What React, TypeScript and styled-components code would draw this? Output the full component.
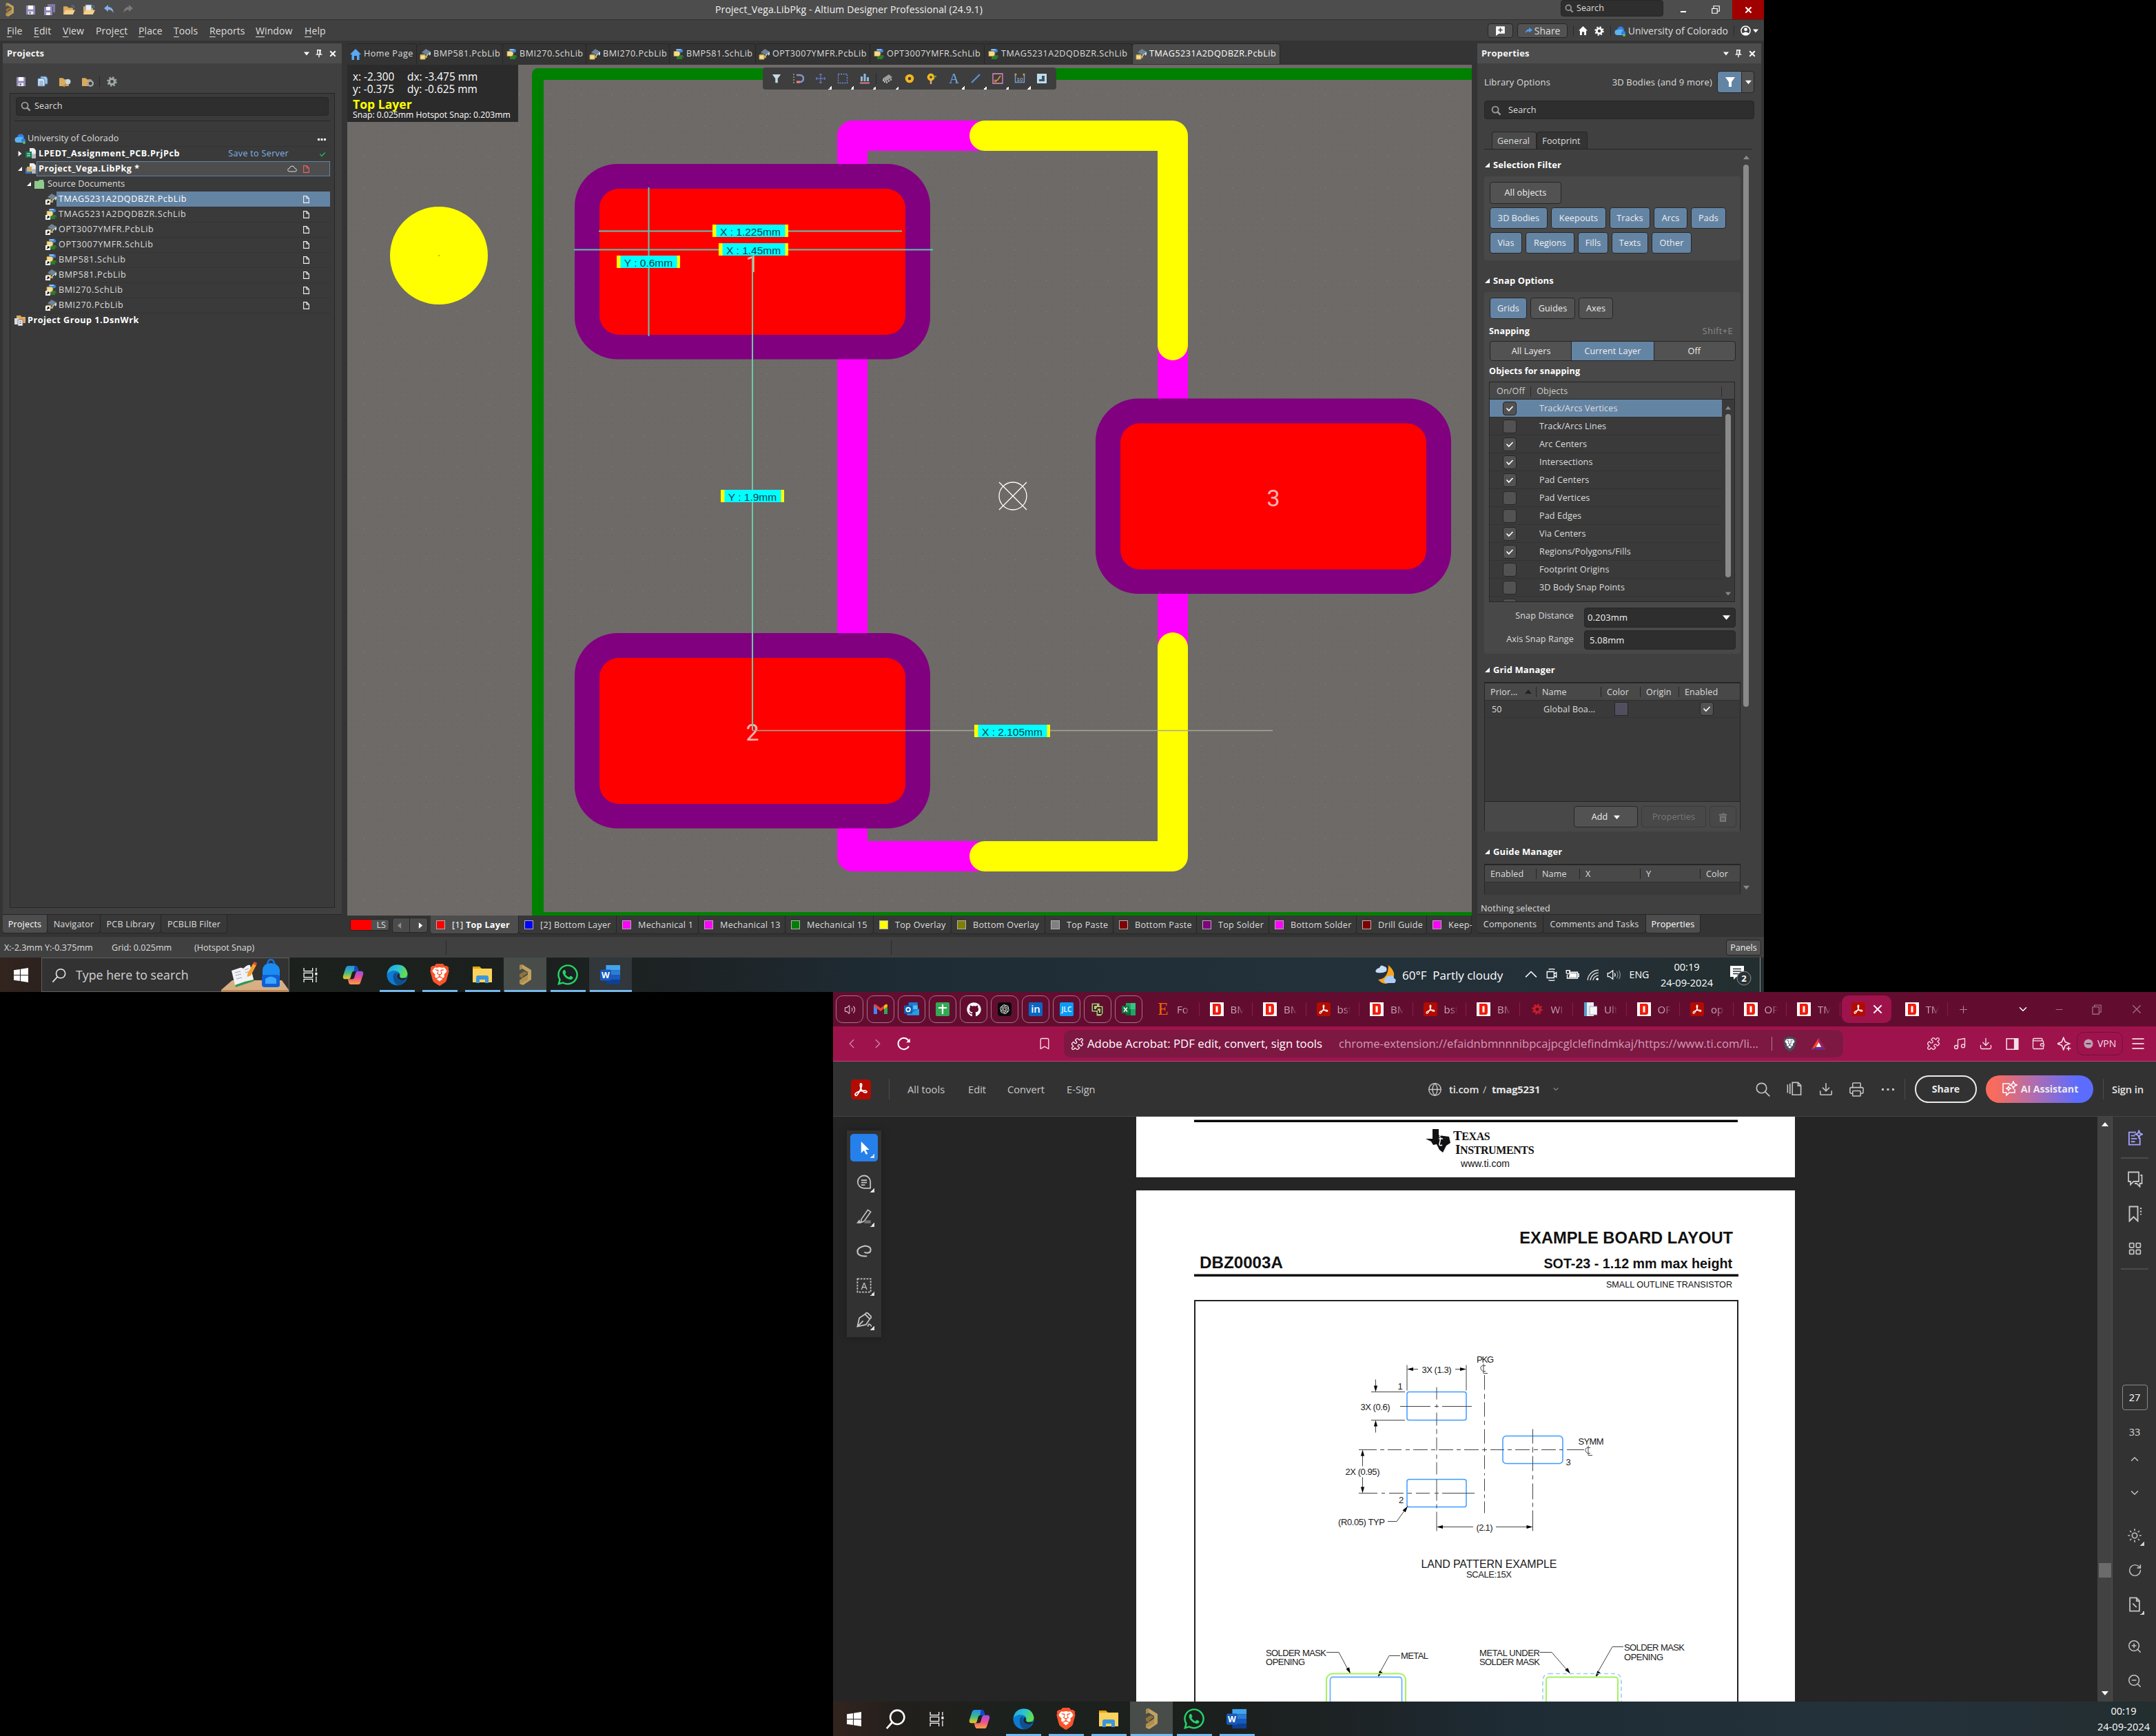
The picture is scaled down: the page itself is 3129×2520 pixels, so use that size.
import React from 'react';
import styled, { createGlobalStyle, css } from 'styled-components';
import {
  Bookmark, Music, Download, Wallet, Puzzle, Menu, Minus, Plus, ChevronDown, ChevronUp,
  ChevronLeft, ChevronRight, Globe, Printer, ZoomIn, ZoomOut, Sun, LayoutGrid, RotateCw, Volume2,
} from 'lucide-react';
import { FaGithub, FaWhatsapp } from 'react-icons/fa';
import { FaBrave } from 'react-icons/fa6';
import { RiOpenaiFill } from 'react-icons/ri';

const Global = createGlobalStyle`
  * { box-sizing: border-box; }
  body { margin: 0; background: #000; }
  svg { display: block; flex: none; }
`;

const ui = `"Open Sans", "Noto Sans", sans-serif`;
const arial = `"Liberation Sans", Arial, sans-serif`;
const edge = '#262626';

const Desktop = styled.div`
  width: 3129px;
  height: 2520px;
  background: #000;
  font: 12.6px/1 ${ui};
  color: #dedede;
  white-space: nowrap;
  overflow: hidden;
`;
const Monitor = styled.div<{ $w: number; $h: number; $left?: number }>`
  width: ${p => p.$w}px;
  height: ${p => p.$h}px;
  margin-left: ${p => p.$left ?? 0}px;
  display: flex;
  flex-direction: column;
  overflow: hidden;
`;

/* ---------- Altium chrome ---------- */
const TitleBar = styled.div`
  height: 29px;
  flex: none;
  background: #4d4d4d;
  border-bottom: 1px solid #303030;
  display: flex;
  align-items: center;
`;
const QuickAccess = styled.div`
  width: 1038px;
  padding-left: 7px;
  display: flex;
  gap: 12px;
  align-items: center;
  svg:first-child { margin-right: 4px; }
`;
const TitleText = styled.div`
  width: 1227px;
  font-size: 14px;
  letter-spacing: 0.12px;
  color: #f2f2f2;
`;
const TitleSearch = styled.div`
  width: 149px;
  height: 24px;
  margin-top: -4px;
  background: #2e2e2e;
  border: 1px solid ${edge};
  border-radius: 4px;
  display: flex;
  align-items: center;
  gap: 4px;
  padding-left: 5px;
  color: #dedede;
`;
const WinButton = styled.div<{ $red?: boolean; $w: number; $pr?: number }>`
  width: ${p => p.$w}px;
  height: 28px;
  padding-right: ${p => p.$pr ?? 0}px;
  display: flex;
  align-items: center;
  justify-content: center;
  background: ${p => (p.$red ? '#a00000' : 'transparent')};
`;
const MenuBar = styled.div`
  height: 30px;
  flex: none;
  background: #404040;
  display: flex;
  align-items: center;
  padding: 1px 0 0 10px;
  font-size: 14px;
`;
const MenuItem = styled.div<{ $w: number }>`
  width: ${p => p.$w}px;
  letter-spacing: 0.1px;
  u { text-underline-offset: 3px; }
`;
const MenuRight = styled.div`
  margin-left: auto;
  display: flex;
  align-items: center;
  height: 30px;
`;
const HeadButton = styled.div<{ $w: number }>`
  width: ${p => p.$w}px;
  height: 21px;
  margin-right: 6px;
  border: 1px solid ${edge};
  border-radius: 4px;
  background: #525252;
  display: flex;
  align-items: center;
  justify-content: center;
  gap: 3px;
`;
const Sep = styled.div<{ $h: number; $m?: string; $c?: string }>`
  width: 1px;
  height: ${p => p.$h}px;
  margin: ${p => p.$m ?? 0};
  background: ${p => p.$c ?? '#2a2a2a'};
  flex: none;
`;
const Workspace = styled.div`
  height: 1301px;
  flex: none;
  background: #343434;
  padding: 4px 4px 0;
  display: flex;
  gap: 8px;
`;
const Column = styled.div<{ $w: number }>`
  width: ${p => p.$w}px;
  display: flex;
  flex-direction: column;
  overflow: hidden;
`;
const PanelHeader = styled.div`
  height: 29px;
  flex: none;
  background: #4d4d4d;
  display: flex;
  align-items: center;
  padding: 0 7px 0 6px;
  font-weight: 700;
  font-size: 13px;
  letter-spacing: 0.2px;
  color: #f4f4f4;
  span { flex: 1; }
`;
const HeaderIcons = styled.div`
  display: flex;
  align-items: center;
  gap: 8px;
`;
const PanelBody = styled.div`
  height: 1236px;
  flex: none;
  background: #404040;
  border-bottom: 1px solid ${edge};
  letter-spacing: 0.12px;
`;
const DockTabs = styled.div`
  display: flex;
  height: 27px;
`;
const DockTab = styled.div<{ $w: number; $on?: boolean }>`
  width: ${p => p.$w}px;
  height: 27px;
  padding-top: 3px;
  letter-spacing: 0.18px;
  border: 1px solid ${edge};
  border-top: 0;
  border-left-width: 0;
  border-radius: 0 0 4px 4px;
  background: ${p => (p.$on ? '#4d4d4d' : '#383838')};
  color: ${p => (p.$on ? '#fff' : '#dedede')};
  display: flex;
  align-items: center;
  justify-content: center;
`;

/* ---------- Projects panel ---------- */
const ProjectTools = styled.div`
  height: 43px;
  display: flex;
  align-items: center;
  gap: 16px;
  padding: 9px 0 0 19px;
`;
const TreeBox = styled.div`
  height: 1183px;
  margin: 0 10px;
  border: 1px solid ${edge};
  background: #3a3a3a;
  padding: 5px 6px 0;
`;
const SearchField = styled.div<{ $h: number; $gap: number }>`
  height: ${p => p.$h}px;
  background: #2e2e2e;
  border: 1px solid ${edge};
  border-radius: 4px;
  display: flex;
  align-items: center;
  gap: ${p => p.$gap}px;
  padding-left: 6px;
`;
const TreeHead = styled.div`
  padding: 0 2px 7px;
  border-bottom: 1px solid ${edge};
  margin: 0 0 14px;
`;
const TreeRow = styled.div<{ $indent: number; $bold?: boolean; $file?: boolean }>`
  height: 22px;
  display: flex;
  align-items: center;
  padding-left: ${p => p.$indent}px;
  font-weight: ${p => (p.$bold ? 700 : 400)};
  letter-spacing: ${p => (p.$bold ? 0.52 : p.$file ? 0.58 : 0.08)}px;
  color: ${p => (p.$bold ? '#fff' : '#dedede')};
`;
const Twisty = styled.div`
  width: 16px;
  display: flex;
  justify-content: center;
`;
const RowIcon = styled.div`
  width: 16px;
  flex: none;
`;
const RowLabel = styled.div<{ $state?: 'sel' | 'focus' }>`
  flex: 1;
  height: 22px;
  display: flex;
  align-items: center;
  padding-left: 3px;
  border-top: 1px solid #343434;
  ${p => p.$state === 'sel' && css`background: #6484a4; border-color: #6484a4; color: #fff;`}
  ${p => p.$state === 'focus' && css`background: #4d4d4d; border: 1px solid #6484a4; padding-left: 2px;`}
`;
const Fill = styled.div`flex: 1;`;
const Status = styled.div<{ $w: number }>`
  width: ${p => p.$w}px;
`;
const Link = styled.span`
  color: #7fb2ec;
  font-weight: 400;
  letter-spacing: 0.3px;
  margin-right: 44px;
`;

/* ---------- Document area ---------- */
const DocTabs = styled.div`
  height: 31px;
  flex: none;
  display: flex;
`;
const DocTab = styled.div<{ $w: number; $on?: boolean }>`
  width: ${p => p.$w}px;
  flex: none;
  height: 30px;
  display: flex;
  align-items: center;
  gap: 4px;
  padding-left: 4px;
  letter-spacing: 0.5px;
  border: 1px solid ${edge};
  border-left: 0;
  border-bottom: 0;
  border-radius: 4px 4px 0 0;
  background: ${p => (p.$on ? '#4d4d4d' : '#343434')};
  color: ${p => (p.$on ? '#fff' : '#dedede')};
`;
const Canvas = styled.div`
  position: relative;
  height: 1235px;
  flex: none;
`;
const HeadsUp = styled.div`
  position: absolute;
  left: 0;
  top: 0;
  width: 248px;
  height: 83px;
  background: #2b2b2b;
  color: #fff;
  padding: 9px 0 0 8px;
  font-size: 15.4px;
  line-height: 18px;
`;
const HudRow = styled.div`
  display: flex;
  span { width: 79px; }
`;
const HudLayer = styled.div`
  font-size: 17.6px;
  font-weight: 700;
  color: #ffff00;
  line-height: 22px;
  margin-top: 1px;
`;
const HudSnap = styled.div`
  font-size: 12.2px;
  line-height: 12px;
  margin-top: -1px;
`;
const ActiveBar = styled.div`
  position: absolute;
  left: 603px;
  top: 4px;
  width: 426px;
  height: 32px;
  border-radius: 4px;
  background: #3e3e3e;
  display: flex;
  align-items: center;
  padding-left: 4px;
`;
const ToolCell = styled.div<{ $more?: boolean }>`
  width: 32px;
  height: 32px;
  display: flex;
  align-items: center;
  justify-content: center;
  ${p => p.$more && css`
    background: linear-gradient(135deg, transparent 50%, #fff 50%) 27px 27px / 5px 5px no-repeat;
  `}
`;
const LayerBar = styled.div`
  height: 31px;
  flex: none;
  display: flex;
  align-items: flex-start;
  padding-left: 4px;
  overflow: hidden;
`;
const LayerSet = styled.div`
  margin: 5px 4px 0 0;
  width: 57px;
  flex: none;
  height: 17px;
  border: 1px solid ${edge};
  border-radius: 3px;
  background: linear-gradient(90deg, #f00 30px, #525252 30px);
  text-align: right;
  padding: 2px 4px 0 0;
`;
const LayerArrows = styled.div`
  margin: 3px 4px 0 0;
  width: 52px;
  flex: none;
  height: 22px;
  border: 1px solid ${edge};
  border-radius: 4px;
  background: #4b4b4b;
  display: flex;
  align-items: center;
  justify-content: space-around;
`;
const LayerTab = styled.div<{ $w: number; $on?: boolean }>`
  width: ${p => p.$w}px;
  height: 27px;
  flex: none;
  display: flex;
  align-items: center;
  gap: 10px;
  padding: 3px 0 0 8px;
  letter-spacing: 0.3px;
  border: 1px solid ${edge};
  border-left: 0;
  border-top: 0;
  border-radius: 0 0 4px 4px;
  background: ${p => (p.$on ? '#4d4d4d' : '#383838')};
  color: ${p => (p.$on ? '#fff' : '#dedede')};
`;
const Swatch = styled.i<{ $c: string }>`
  width: 13px;
  height: 13px;
  margin-top: -2px;
  flex: none;
  background: ${p => p.$c};
  border: 1px solid #b0b0b0;
`;

/* ---------- Properties panel ---------- */
const OptionsRow = styled.div`
  height: 54px;
  display: flex;
  align-items: center;
  padding: 0 10px;
  font-size: 13px;
  letter-spacing: 0.15px;
`;
const FilterButton = styled.div`
  width: 54px;
  height: 32px;
  margin-left: 7px;
  border: 1px solid ${edge};
  border-radius: 4px;
  background: linear-gradient(90deg, #6484a4 34px, ${edge} 34px, ${edge} 35px, #525252 35px);
  display: flex;
  align-items: center;
  padding-left: 10px;
  gap: 14px;
`;
const PropSearch = styled(SearchField)`
  margin: 0 10px;
  padding: 1px 0 0 9px;
`;
const PropTabs = styled.div`
  margin: 18px 13px 0 10px;
  height: 26px;
  padding-left: 11px;
  border-bottom: 1px solid ${edge};
  display: flex;
`;
const PropTab = styled.div<{ $w: number; $on?: boolean }>`
  width: ${p => p.$w}px;
  border: 1px solid ${edge};
  border-bottom: 0;
  border-radius: 4px 4px 0 0;
  background: ${p => (p.$on ? '#4a4a4a' : '#343434')};
  display: flex;
  align-items: center;
  justify-content: center;
  padding: 3px 2px 0 0;
`;
const PropScroll = styled.div`
  display: flex;
  height: 1082px;
  padding-left: 10px;
`;
const PropContent = styled.div`
  width: 372px;
  height: 1082px;
  overflow: hidden;
`;
const Heading = styled.div<{ $top: number }>`
  height: 20px;
  margin-top: ${p => p.$top}px;
  display: flex;
  align-items: center;
  gap: 5px;
  padding-left: 1px;
  font-size: 13px;
  font-weight: 700;
  color: #fff;
`;
const Group = styled.div<{ $h: number }>`
  height: ${p => p.$h}px;
  margin-top: 7px;
  padding: 8px 7px 0 8px;
  background: #484848;
  border-radius: 4px;
`;
const Buttons = styled.div<{ $mb?: number }>`
  display: flex;
  gap: 5px;
  margin-bottom: ${p => p.$mb ?? 5}px;
`;
const Button = styled.div<{ $w: number; $h?: number; $on?: boolean; $dim?: boolean }>`
  width: ${p => p.$w}px;
  height: ${p => p.$h ?? 31}px;
  padding-top: 1px;
  border: 1px solid ${p => (p.$dim ? '#3a3a3a' : edge)};
  border-radius: 4px;
  background: ${p => (p.$on ? '#6484a4' : p.$dim ? '#484848' : '#525252')};
  color: ${p => (p.$dim ? '#777' : '#f0f0f0')};
  display: flex;
  align-items: center;
  justify-content: center;
  gap: 9px;
`;
const Caption = styled.div<{ $h: number }>`
  height: ${p => p.$h}px;
  display: flex;
  align-items: center;
  justify-content: space-between;
  padding: 1px 4px 0 0;
  margin-left: -1px;
  b { color: #fff; }
  span { color: #8b8b8b; letter-spacing: 0.5px; }
`;
const Segments = styled.div`
  height: 29px;
  display: flex;
  border: 1px solid ${edge};
  border-radius: 4px;
  background: #525252;
`;
const Segment = styled.div<{ $on?: boolean }>`
  flex: 1;
  display: flex;
  align-items: center;
  justify-content: center;
  padding-top: 1px;
  color: #f0f0f0;
  ${p => p.$on && css`background: #6484a4; box-shadow: -1px 0 ${edge}, 1px 0 ${edge};`}
`;
const SnapTable = styled.div`
  margin: 1px 0 0 -1px;
  width: 357px;
  height: 320px;
  border: 1px solid ${edge};
  display: flex;
  flex-direction: column;
  overflow: hidden;
  background: #3a3a3a;
`;
const SnapHead = styled.div`
  height: 25px;
  flex: none;
  background: #484848;
  border-bottom: 1px solid ${edge};
  display: flex;
  align-items: center;
  padding: 2px 18px 0 10px;
  color: #cfcfcf;
`;
const SnapRows = styled.div`flex: 1;`;
const SnapBody = styled.div`
  display: flex;
  height: 293px;
`;
const SnapRow = styled.div<{ $on?: boolean }>`
  height: 26px;
  display: flex;
  align-items: center;
  gap: 33px;
  padding: 1px 0 0 19px;
  border-bottom: 1px solid #323232;
  background: ${p => (p.$on ? '#6484a4' : 'transparent')};
`;
const Check = styled.div`
  width: 20px;
  height: 20px;
  border: 1px solid ${edge};
  border-radius: 4px;
  background: #525252;
  display: flex;
  align-items: center;
  justify-content: center;
`;
const Track = styled.div<{ $w: number }>`
  width: ${p => p.$w}px;
  display: flex;
  flex-direction: column;
  align-items: center;
`;
const Thumb = styled.div<{ $h: number; $mt: number; $mb: number }>`
  width: 8px;
  height: ${p => p.$h}px;
  margin: ${p => p.$mt}px 0 ${p => p.$mb}px;
  border-radius: 4px;
  background: #8a8a8a;
`;
const Field = styled.div<{ $mt: number; $lift?: number }>`
  margin-top: ${p => p.$mt}px;
  display: flex;
  align-items: center;
  label { width: 122px; text-align: right; margin-right: 15px; padding-bottom: ${p => p.$lift ?? 0}px; }
`;
const Input = styled.div<{ $h: number; $pl: number }>`
  width: 220px;
  height: ${p => p.$h}px;
  border: 1px solid ${edge};
  border-radius: 4px;
  background: #2e2e2e;
  color: #f2f2f2;
  display: flex;
  align-items: center;
  justify-content: space-between;
  padding: 0 7px 0 ${p => p.$pl}px;
  font-size: 13px;
`;
const Grid = styled.div<{ $h: number; $cut?: boolean }>`
  height: ${p => p.$h}px;
  margin-top: 8px;
  border: 1px solid ${edge};
  border-top-width: 2px;
  ${p => p.$cut && css`border-bottom: 0;`}
  border-radius: 0 0 3px 3px;
  background: #3a3a3a;
`;
const GridHead = styled.div`
  height: 25px;
  background: #484848;
  border-bottom: 1px solid #303030;
  display: flex;
  align-items: center;
`;
const GridCell = styled.div<{ $w: number; $last?: boolean }>`
  width: ${p => p.$w}px;
  flex: none;
  padding-left: 8px;
  line-height: 15px;
  border-right: ${p => (p.$last ? 0 : 1)}px solid ${edge};
  display: flex;
  align-items: center;
  justify-content: space-between;
  padding-right: 6px;
`;
const GridRow = styled.div`
  height: 25px;
  display: flex;
  align-items: center;
  padding-left: 2px;
  border-bottom: 1px solid #343434;
`;
const GridFoot = styled.div`
  margin-top: 121px;
  height: 44px;
  border-top: 1px solid ${edge};
  background: #484848;
  display: flex;
  justify-content: flex-end;
  gap: 5px;
  padding: 6px 5px 0 0;
`;
const Nothing = styled.div`
  height: 29px;
  display: flex;
  align-items: center;
  padding: 12px 0 0 5px;
`;
const StatusBar = styled.div`
  height: 30px;
  flex: none;
  background: #404040;
  display: flex;
  align-items: center;
  padding: 1px 4px 0 6px;
  font-size: 12.6px;
`;
const StatusText = styled.div<{ $w: number }>`width: ${p => p.$w}px; flex: none; padding-top: 1px;`;

/* ---------- Windows taskbar ---------- */
const Taskbar = styled.div`
  height: 50px;
  flex: none;
  display: flex;
  background: linear-gradient(90deg, #33241f 0, #221f1c 5%, #1c211d 14%, #1b201e 30%, #1d2224 38%, #1e2c36 52%, #22313a 75%, #243038 88%, #232e2f 100%);
  color: #fff;
`;
const TaskCell = styled.div<{ $w?: number; $hl?: string; $run?: number }>`
  width: ${p => p.$w ?? 62}px;
  height: 50px;
  flex: none;
  display: flex;
  align-items: center;
  justify-content: center;
  ${p => p.$run && css`
    background: linear-gradient(#76b9ed, #76b9ed) center bottom / ${p.$run}px 3px no-repeat, ${p.$hl ?? 'transparent'};
  `}
`;
const TaskSearch = styled.div`
  width: 360px;
  height: 50px;
  border: 1px solid #5f5f5f;
  background: #323232;
  display: flex;
  align-items: center;
  padding: 1px 0 0 14px;
  font-size: 17.8px;
  color: #d2d2d2;
  gap: 13px;
  svg:last-child { margin-left: auto; }
`;
const Tray = styled.div`
  margin-left: auto;
  display: flex;
  align-items: center;
  font-size: 17px;
`;
const Weather = styled.div`
  width: 212px;
  display: flex;
  align-items: center;
  gap: 8px;
  white-space: pre;
`;
const Clock = styled.div<{ $w: number }>`
  width: ${p => p.$w}px;
  font-size: 14.6px;
  line-height: 23px;
  text-align: center;
`;
const Eng = styled.span`font-size: 14.2px;`;

/* ---------- Browser ---------- */
const TabStrip = styled.div`
  height: 50px;
  flex: none;
  background: #620d2f;
  display: flex;
  align-items: center;
  padding-left: 4px;
`;
const Pin = styled.div`
  width: 40px;
  height: 40px;
  margin-right: 5px;
  flex: none;
  border: 1px solid #a8718a;
  border-radius: 10px;
  display: flex;
  align-items: center;
  justify-content: center;
`;
const BTab = styled.div`
  width: 77.5px;
  height: 20px;
  flex: none;
  display: flex;
  align-items: center;
  padding-left: 15px;
  border-right: 1px solid #94164a;
`;
const BTabText = styled.span`
  width: 19px;
  margin-left: 10px;
  font-size: 15px;
  line-height: 20px;
  overflow: hidden;
  color: #c9a3b3;
  mask-image: linear-gradient(90deg, #000 50%, transparent);
`;
const ActiveTab = styled.div`
  width: 72px;
  height: 40px;
  flex: none;
  margin: 0 5px 0 2px;
  border-radius: 10px;
  background: #9f134c;
  display: flex;
  align-items: center;
  padding-left: 14px;
  gap: 9px;
`;
const Cell = styled.div<{ $w: number }>`
  width: ${p => p.$w}px;
  display: flex;
  align-items: center;
  justify-content: center;
  flex: none;
`;
const AddressBar = styled.div`
  height: 51px;
  flex: none;
  background: #9f134c;
  border-bottom: 1px solid #b9487a;
  display: flex;
  align-items: center;
  padding-left: 8px;
`;
const UrlBox = styled.div`
  width: 1131px;
  height: 40px;
  flex: none;
  margin-left: 9px;
  border-radius: 10px;
  background: #7d1843;
  display: flex;
  align-items: center;
  padding-left: 10px;
  font-size: 16.8px;
  color: #fff;
`;
const UrlTitle = styled.span`width: 365px; margin-left: 5px; flex: none;`;
const UrlText = styled.span`width: 628px; flex: none; color: #cf9cb3; font-size: 16.6px;`;
const Vpn = styled.div`
  width: 67px;
  height: 34px;
  border: 1px solid #6f1039;
  border-radius: 10px;
  display: flex;
  align-items: center;
  gap: 6px;
  padding-left: 9px;
  font-size: 14px;
  color: #f3dfe7;
`;
const AcroBar = styled.div`
  height: 80px;
  flex: none;
  background: #323232;
  border-bottom: 1px solid #444;
  display: flex;
  align-items: center;
  font-size: 14.7px;
  color: #c8c8c8;
  padding: 1px 0 0 26px;
`;
const AcroItem = styled.div<{ $w: number; $weight?: number }>`
  width: ${p => p.$w}px;
  flex: none;
  ${p => p.$weight && css`font-weight: ${p.$weight}; color: #e6e6e6; letter-spacing: -0.15px;`}
`;
const Pill = styled.div<{ $w: number; $ai?: boolean }>`
  width: ${p => p.$w}px;
  height: 40px;
  flex: none;
  border-radius: 20px;
  display: flex;
  align-items: center;
  justify-content: center;
  gap: 5px;
  font-weight: 700;
  font-size: 14.2px;
  color: #ebebeb;
  ${p => (p.$ai ? css`background: linear-gradient(90deg, #f96b5c 8%, #b06cb0 45%, #5c6cff 85%);` : css`border: 2px solid #ebebeb;`)}
`;
const Viewer = styled.div`
  height: 849px;
  flex: none;
  background: #252525;
  display: flex;
`;
const ToolRail = styled.div`
  width: 50px;
  height: 300px;
  margin: 20px 370px 0 20px;
  background: #323232;
  box-shadow: 0 0 8px #1c1c1c;
  padding: 5px;
`;
const RailTool = styled.div<{ $on?: boolean; $more?: boolean }>`
  width: 40px;
  height: 40px;
  margin-bottom: 10px;
  border-radius: 5px;
  display: flex;
  align-items: center;
  justify-content: center;
  background: ${p => (p.$more ? 'linear-gradient(135deg, transparent 50%, #e0e0e0 50%) 29px 29px / 6px 6px no-repeat' : 'none')}
    ${p => (p.$on ? ', #2680eb' : '')};
`;
const Pages = styled.div`width: 956px;`;
const FooterPage = styled.div`
  height: 88px;
  background: #fff;
  padding: 4px 83px 0 84px;
  color: #111;
`;
const Rule = styled.div`
  height: 4px;
  border-top: 1px solid #999;
  background: #000;
`;
const TiBrand = styled.div`
  display: flex;
  margin: 10px 0 0 336px;
  gap: 4px;
`;
const TiWords = styled.div`
  font: 700 19px/19px "Liberation Serif", "Times New Roman", serif;
  letter-spacing: -0.4px;
  small { font-size: 16px; }
  div + div { margin-left: 3px; }
`;
const TiUrl = styled.div`
  font: 14px/14px ${arial};
  text-align: center;
  padding-left: 56px;
  margin-top: 3px;
`;
const SheetPage = styled.div`
  height: 742px;
  margin-top: 19px;
  background: #fff;
  color: #111;
  font-family: ${arial};
  padding: 0 82px 0 84px;
  overflow: hidden;
`;
const SheetTitle = styled.div`
  padding: 56px 8px 0 0;
  text-align: right;
  font-weight: 700;
  font-size: 23.7px;
  line-height: 26px;
`;
const SheetSub = styled.div`
  display: flex;
  justify-content: space-between;
  align-items: baseline;
  padding: 9px 9px 1px 8px;
  font-weight: 700;
  line-height: 28px;
  font-size: 19.7px;
  b { font-size: 24.2px; }
`;
const SheetKind = styled.div`
  text-align: right;
  padding-right: 9px;
  font-size: 12.6px;
  line-height: 20px;
  margin: 2px 0 12px;
`;
const Frame = styled.div`
  height: 583px;
  border: 2px solid #222;
  border-bottom: 0;
`;
const PageScroll = styled.div`
  width: 22px;
  margin-left: 439px;
  background: #424242;
  border-right: 1px solid #4e4e4e;
  display: flex;
  flex-direction: column;
  align-items: center;
  padding: 6px 0 7px;
`;
const PageThumb = styled.div`
  width: 18px;
  height: 21px;
  margin: 632px 0 auto;
  background: #6b6b6b;
`;
const RightRail = styled.div`
  flex: 1;
  background: #323232;
  display: flex;
  flex-direction: column;
  align-items: center;
  padding: 5px 0 0 1px;
  font-size: 14.6px;
  color: #d8d8d8;
`;
const RailCell = styled.div<{ $h: number; $more?: boolean }>`
  width: 40px;
  height: ${p => p.$h}px;
  display: flex;
  align-items: center;
  justify-content: center;
  ${p => p.$more && css`
    background: linear-gradient(135deg, transparent 50%, #d0d0d0 50%) 28px calc(50% + 12px) / 6px 6px no-repeat;
  `}
`;
const RailLine = styled.div<{ $h: number }>`
  width: 40px;
  height: ${p => p.$h}px;
  margin: 4px 0 5px;
  background: #4b4b4b;
`;
const PageNo = styled.div`
  width: 37px;
  height: 37px;
  flex: none;
  border: 1px solid #8a8a8a;
  border-radius: 4px;
  display: flex;
  align-items: center;
  justify-content: center;
  color: #fff;
`;
const Spacer = styled.div<{ $h: number }>`height: ${p => p.$h}px; flex: none;`;
const ColorBox = styled.i`width: 20px; height: 20px; border: 1px solid ${edge}; background: #514f5f;`;
const AiTile = styled.div`
  width: 20px;
  height: 20px;
  border-radius: 4px;
  background: #0b0b0b;
  display: flex;
  align-items: center;
  justify-content: center;
`;
const TabFav = styled.div`width: 20px; display: flex; justify-content: center; flex: none;`;

/* ---------- Icons ---------- */
const Svg = ({ w = 16, h = w, vb = '0 0 16 16', children }: { w?: number; h?: number; vb?: string; children: React.ReactNode }) => (
  <svg width={w} height={h} viewBox={vb} fill="none">{children}</svg>
);
const Altium = ({ w = 14, h = 20 }) => (
  <Svg w={w} h={h} vb="0 0 20 30">
    <path d="M2 1L6 0L19 8V22L7 30L2 28V23L14 15V11L6 6L2 8Z" fill="#c0a160" />
    <path d="M14 15V22L7 26L2 28V23Z" fill="#b08f4e" />
    <path d="M2 14L9 10L14 12.500L7 17V20L2 18Z" fill="#8f7438" />
    <path d="M2 1L6 0V6L2 8Z" fill="#a98a4a" />
  </Svg>
);
const Floppy = () => (
  <Svg w={15}><path d="M1 1H15V15H1Z" fill="#8f88b8" /><path d="M4 1H12V7H4Z" fill="#fff" /><path d="M4 10H12V15H4Z" fill="#e9e9f2" /><path d="M6 11H8V14H6Z" fill="#555" /></Svg>
);
const Floppies = () => (
  <Svg><path d="M5 0H16V12H13V4H5Z" fill="#7f78ac" /><path d="M0 4H12V16H0Z" fill="#8f88b8" /><path d="M3 4H9V9H3Z" fill="#fff" /><path d="M3 12H9V16H3Z" fill="#eee" /></Svg>
);
const Folder = ({ badge }: { badge?: 'open' | 'doc' | 'find' | 'gear' }) => (
  <Svg w={17}>
    <path d="M0 3H5L7 5H13V14H0Z" fill="#d9a95c" />
    {badge === 'doc' && <path d="M3 1H11V10H3Z" fill="#e8eef5" stroke="#7c98b8" strokeWidth=".7" />}
    {(badge === 'open' || badge === 'doc') && <><path d="M3 8H16L13 14H0Z" fill="#f4cf8c" /><path d="M11 2Q14 1 15 5" stroke="#4a90c0" /></>}
    {badge === 'find' && <><circle cx="12" cy="8" r="3.500" fill="#c6d7e4" /><path d="M9.500 11L6 15" stroke="#c08b4a" strokeWidth="2" /></>}
    {badge === 'gear' && <circle cx="11.500" cy="10.500" r="3.400" stroke="#9ea4a8" strokeWidth="2.400" fill="#3a3a3a" />}
  </Svg>
);
const Docs = () => (
  <Svg><path d="M5 1H13L15 4V12H5Z" fill="#a7c4e4" stroke="#4878a8" /><path d="M1 4H9L11 7V15H1Z" fill="#e3eefa" stroke="#4878a8" /><path d="M3 8H9M3 10.500H9M3 13H9" stroke="#4878a8" /></Svg>
);
const Gear = ({ s = 15, c = '#a0a8ac' }) => (
  <Svg w={s}><circle cx="8" cy="8" r="4.200" stroke={c} strokeWidth="3.200" /><circle cx="8" cy="8" r="6.600" stroke={c} strokeWidth="2.200" strokeDasharray="2.600 2.580" /></Svg>
);
const Undo = ({ c, flip }: { c: string; flip?: boolean }) => (
  <Svg><g transform={flip ? 'translate(16 0) scale(-1 1)' : undefined}><path d="M1 6L7 1V4Q14 4 15 13Q12 8 7 8V11Z" fill={c} /></g></Svg>
);
const Magnifier = ({ s = 15, c = '#9a9a9a' }) => (
  <Svg w={s}><circle cx="6.500" cy="6.500" r="4.800" stroke={c} strokeWidth="2" /><path d="M10 10L14.500 14.500" stroke={c} strokeWidth="2.600" /></Svg>
);
const Cloud = () => (
  <Svg><circle cx="9" cy="6.500" r="5" fill="#2f7fe6" /><circle cx="4.500" cy="10" r="4" fill="#5bb4f0" /><circle cx="9" cy="9.500" r="4" fill="#5bb4f0" /><path d="M4 8H13V14H4Z" fill="#5bb4f0" /><circle cx="13" cy="11" r="3" fill="#2f7fe6" /><circle cx="14" cy="14" r="2" fill="#5fc05f" /></Svg>
);
const Tri = ({ d = 'down', c = '#fff', w = 8 }: { d?: 'down' | 'up' | 'left' | 'right' | 'corner'; c?: string; w?: number }) => {
  const pts = { down: '0,2 10,2 5,8', up: '0,8 10,8 5,2', left: '8,0 8,10 2,5', right: '2,0 2,10 8,5', corner: '10,0 10,10 0,10' }[d];
  return <Svg w={w} vb="0 0 10 10"><polygon points={pts} fill={c} /></Svg>;
};
const PinIcon = () => (
  <Svg w={12}><path d="M4 1H12M5 1V9M9.500 1V9M10.500 1V9M2 9.500H14M8 9V15" stroke="#fff" strokeWidth="1.800" /></Svg>
);
const Cross = ({ s = 12, c = '#fff', k = 2.6 }) => (
  <Svg w={s}><path d="M3 3L13 13M13 3L3 13" stroke={c} strokeWidth={k} /></Svg>
);
const DocGlyph = ({ c = '#f0f0f0' }) => (
  <Svg w={9} h={11} vb="0 0 9 11"><path d="M.6.600H5L8.400 4V10.400H.6ZM5 .6V4H8.400" stroke={c} strokeWidth="1.100" /></Svg>
);
const PcbIcon = ({ shortcut = true }) => (
  <Svg w={16}>
    <path d="M3 5L9 0L16 4L10 9Z" fill="#6f8394" /><path d="M3 5L10 9V11L3 8Z" fill="#44545f" /><path d="M10 9L16 4V8L14 10V7L10 11Z" fill="#cfdfe6" />
    <path d="M1 8H8V10H1ZM5 10H11V13H5Z" fill="#c9a34a" />
    {shortcut ? <><path d="M0 9H7V16H0Z" fill="#fff" /><path d="M2 14L5 11M2.500 11H5V13.500" stroke="#000" strokeWidth="1.200" /></> : <path d="M1 9H8V15H1Z" fill="#f1dc92" stroke="#c9a34a" />}
  </Svg>
);
const SchIcon = ({ shortcut = true }) => (
  <Svg w={16}>
    <path d="M5 0H12Q15 0 15 3T11 5H5Z" fill="#3f86dc" /><path d="M6 .5H12V2H6Z" fill="#a8ccf4" />
    <path d="M6 9H14V15H6Z" fill="#2f7a2c" /><path d="M14 9L16 13" stroke="#2f7a2c" strokeWidth="1.500" />
    <path d="M2 3.500H9Q13 6.500 9 10.500H2Z" fill="#f4dc8e" stroke="#c2922e" strokeWidth=".8" />
    {shortcut && <><path d="M0 9H7V16H0Z" fill="#fff" /><path d="M2 14L5 11M2.500 11H5V13.500" stroke="#000" strokeWidth="1.200" /></>}
  </Svg>
);
const PrjIcon = ({ lib }: { lib?: boolean }) => (
  <Svg w={16}>
    <path d="M6 0H12L15 3V11H6Z" fill="#eee" />
    {lib ? <><path d="M0 7H8V15H0Z" fill="#3a78c8" /><path d="M2 5H10V12H2Z" fill="#d8ae5a" /></> : <><path d="M0 5H9V14H0Z" fill="#0c7a4a" /><path d="M2 8H7M2 11H7" stroke="#fff" /></>}
    <path d="M9 7H15V15H9Z" fill="#b6b6bd" /><ellipse cx="12" cy="7" rx="3.200" ry="1.500" fill="#e8e8ee" />
  </Svg>
);
const Tick = ({ c = '#fff', s = 12 }) => (
  <Svg w={s} vb="0 0 12 12"><path d="M1.500 5.500L4.800 9L10.500 3" stroke={c} strokeWidth="1.600" /></Svg>
);
const Funnel = ({ c = '#fff', s = 14 }) => (
  <Svg w={s}><path d="M1 1H15L10 8V15H6V8Z" fill={c} /></Svg>
);
const House = ({ s = 14, c = '#fff' }) => (
  <Svg w={s}><path d="M8 0L16 8H13.500V16H10V10H6V16H2.500V8H0Z" fill={c} /></Svg>
);
const Person = () => (
  <Svg w={15}><circle cx="8" cy="8" r="7" stroke="#fff" strokeWidth="1.600" /><circle cx="8" cy="6" r="2.600" fill="#fff" /><path d="M3 12.500Q8 7.500 13 12.500Q8 17 3 12.500Z" fill="#fff" /></Svg>
);
const Pdf = ({ s = 20 }) => (
  <Svg w={s} vb="0 0 24 24">
    <rect width="24" height="24" rx="4" fill="#b30b00" />
    <path d="M5.500 19C3.500 17.600 7 14.800 11 13.900S18.800 13.100 19 14.700 15.600 16.200 13.600 13.600 10.800 7.200 11.200 5.600 13.400 5 12.900 7.600 9.300 16.500 7.600 18.400 5.500 19 5.500 19Z" stroke="#fff" strokeWidth="1.500" />
  </Svg>
);
const DFav = () => (
  <Svg w={20} vb="0 0 20 20"><path d="M0 0H20V20H0Z" fill="#fff" /><path d="M4 2H13Q16 2 16 6V14Q16 18 13 18H4Z" fill="#f01b0c" /><path d="M8.500 5.500H11.500V14.500H8.500Z" fill="#fff" /></Svg>
);
const Brave = ({ s = 34, c = '#fb542b' }) => (
  <svg width={s} height={s} viewBox="0 0 34 34">
    <path d="M9 7L12 5H22L25 7L28 11L24 24L17 30L10 24L6 11Z" fill="#fff" />
    <FaBrave x={1} y={1} size={32} color={c} />
  </svg>
);
const WinLogo = () => (
  <Svg w={21} vb="0 0 20 20"><path d="M0 3L8.500 1.800V9.500H0ZM9.500 1.600L20 0V9.500H9.500ZM0 10.500H8.500V18.200L0 17ZM9.500 10.500H20V20L9.500 18.400Z" fill="#fff" /></Svg>
);
const TaskView = () => (
  <Svg w={21} vb="0 0 20 20"><path d="M1 0V4.500H13V0M1 20V15.500H13V20M1 7H13V13H1ZM18 0V5M18 12V20" stroke="#fff" strokeWidth="1.200" /><path d="M16.500 6.500H19.500V10H16.500Z" fill="#fff" /></Svg>
);
const Copilot = () => (
  <Svg w={31} vb="0 0 32 32">
    <defs>
      <linearGradient id="cpA" x1="0" y1="0" x2="0" y2="1"><stop offset="0" stopColor="#1f8df0" /><stop offset=".5" stopColor="#3fb98c" /><stop offset="1" stopColor="#f2c716" /></linearGradient>
      <linearGradient id="cpB" x1="0" y1="0" x2="0" y2="1"><stop offset="0" stopColor="#9a4df0" /><stop offset=".5" stopColor="#ee4f8e" /><stop offset="1" stopColor="#f9a03c" /></linearGradient>
    </defs>
    <path d="M9 2H19Q22 2 23 6L24 10H17Q15 10 14 13L12 20Q11 22 8 22H4Q0 22 1 17L5 5Q6 2 9 2Z" fill="url(#cpA)" />
    <path d="M18 2H20Q22 2 23 6L24 10H17Z" fill="#1846c8" />
    <path d="M23 30H13Q10 30 9 26L8 22H15Q17 22 18 19L20 12Q21 10 24 10H28Q32 10 31 15L27 27Q26 30 23 30Z" fill="url(#cpB)" />
  </Svg>
);
const EdgeLogo = () => (
  <Svg w={31} vb="0 0 32 32">
    <defs><linearGradient id="edgeTop" x1="0" y1="0" x2="1" y2=".4"><stop offset="0" stopColor="#1fa0e6" /><stop offset=".55" stopColor="#2cc4d0" /><stop offset="1" stopColor="#63de4c" /></linearGradient></defs>
    <circle cx="16" cy="16" r="15.500" fill="#0d7bd0" />
    <path d="M1 14Q3 1 16 .500T31.500 14Q31 20 24 20.500Q19 20.500 20 17Q21 11 14 9.500Q6 8.500 1 14Z" fill="url(#edgeTop)" />
    <path d="M10 18Q10 12 16 12Q13 16 16 20Q20 25 29 22.500Q25 31 16.500 31.500Q10 27 10 18Z" fill="#0f4f92" />
    <path d="M19.500 17.500Q20 21 25 20.500H32L28.500 22.500Q20 25 16.500 20.500Q14 16 18 13Q20 15 19.500 17.500Z" fill="#20262a" />
  </Svg>
);
const Explorer = () => (
  <Svg w={30} vb="0 0 30 28"><path d="M1 2H11L14 5V9H1Z" fill="#e6a20f" /><path d="M1 5H29V25H1Z" fill="#fbd35c" /><path d="M6 26V18Q6 15 9 15H21Q24 15 24 18V26H19V21H11V26Z" fill="#3a96dd" /></Svg>
);
const Word = () => (
  <Svg w={30} vb="0 0 32 32"><path d="M9 1H31V9H9Z" fill="#41a5ee" /><path d="M9 9H31V16H9Z" fill="#2b7cd3" /><path d="M9 16H31V23.500H9Z" fill="#185abd" /><path d="M9 23.500H31V31H9Z" fill="#103f91" /><rect y="8" width="17" height="17" rx="2" fill="#185abd" /><text x="8.500" y="21" fontSize="13" fontWeight="700" fill="#fff" textAnchor="middle" fontFamily="Open Sans">W</text></Svg>
);
const SearchArt = () => (
  <Svg w={98} h={48} vb="0 0 98 48">
    <path d="M16 31H88L98 45V48H0V45Z" fill="#d8ae84" /><path d="M0 45H98V48H0Z" fill="#b98a5c" />
    <path d="M17 20L42 12L48 32L21 41Z" fill="#2f9a50" /><path d="M15 17L27 13Q30 12 32 14Q38 8 42 9L47 30L34 33L20 38Z" fill="#f2f2f6" /><path d="M20 20L28 18M21 24L29 22M34 16L40 14M35 20L41 18M22 29L30 27" stroke="#9aa0b8" />
    <path d="M38 22L46 7L51 9L43 24L38 26Z" fill="#f4a22c" /><path d="M46 7L48 4L52 6L51 9Z" fill="#e8493c" />
    <path d="M67 10Q67 1 72 1T78 10" stroke="#1673e0" strokeWidth="2.500" /><path d="M60 16Q61 6 72 6T85 16V40H60Z" fill="#1a8cf4" /><rect x="59" y="23" width="26" height="18" rx="4" fill="#0f5fd6" /><path d="M64 29Q72 22 80 29V36H64Z" fill="#3aa6ff" />
  </Svg>
);
const Moon = () => (
  <Svg w={32} vb="0 0 32 32"><path d="M20 2Q34 14 24 26Q14 33 5 23Q20 22 20 2Z" fill="#f7a41d" /><path d="M2 9Q4 6 7 6Q9 0 14 4Q19 5 17 11Q12 14 4 13Q0 12 2 9Z" fill="#c5dcfb" /><path d="M15 22Q17 17 22 18Q27 15 28 21Q33 23 29 28H16Q12 26 15 22Z" fill="#a9cdfa" /></Svg>
);

const tray = [
  <Svg key="u" w={18}><path d="M1 11L8 4L15 11" stroke="#fff" strokeWidth="1.300" /></Svg>,
  <Svg key="m" w={18}><path d="M4 1Q8 0 12 1M4 15Q8 16 12 15M2 4H11V12H2ZM11 7L14 5V11L11 9" stroke="#fff" strokeWidth="1.200" /></Svg>,
  <Svg key="b" w={20}><path d="M4 5H14V12H2V8M14 7H15.500V10H14M1 3H5V6Q3 8 1 6Z" stroke="#fff" strokeWidth="1.100" /><path d="M5 6H13V11H4Z" fill="#fff" /></Svg>,
  <Svg key="w" w={18}><path d="M8 15A7 7 0 0 1 15 9M4.500 15A10.500 10.500 0 0 1 15 5.500M1 15A14 14 0 0 1 15 2" stroke="#ddd" strokeWidth="1.200" /><circle cx="13.500" cy="13.500" r="1.600" fill="#fff" /></Svg>,
  <Svg key="v" w={20}><path d="M1 6H3L7 3V13L3 10H1Z" stroke="#fff" /><path d="M9 6Q10.500 8 9 10" stroke="#fff" /><path d="M11.500 4Q14 8 11.500 12M14 3Q17 8 14 13" stroke="#888" /></Svg>,
];

const TaskApps = ({ wordHl }: { wordHl?: boolean }) => (
  <>
    <TaskCell $w={65}><Copilot /></TaskCell>
    <TaskCell $run={51}><EdgeLogo /></TaskCell>
    <TaskCell $run={51}><Brave /></TaskCell>
    <TaskCell $run={51}><Explorer /></TaskCell>
    <TaskCell $run={61} $hl="#484d4a"><Altium w={20} h={30} /></TaskCell>
    <TaskCell $run={51}><FaWhatsapp size={34} color="#25d366" /></TaskCell>
    <TaskCell $run={wordHl ? 61 : 51} $hl={wordHl ? '#31373a' : undefined}><Word /></TaskCell>
  </>
);

/* ---------- Data ---------- */
const menu: [string, string, string, number][] = [
  ['', 'F', 'ile', 39], ['', 'E', 'dit', 42], ['', 'V', 'iew', 48], ['Proje', 'c', 't', 62], ['', 'P', 'lace', 51],
  ['', 'T', 'ools', 52], ['', 'R', 'eports', 67], ['', 'W', 'indow', 71], ['', 'H', 'elp', 50],
];
const files = ['TMAG5231A2DQDBZR.PcbLib', 'TMAG5231A2DQDBZR.SchLib', 'OPT3007YMFR.PcbLib', 'OPT3007YMFR.SchLib', 'BMP581.SchLib', 'BMP581.PcbLib', 'BMI270.SchLib', 'BMI270.PcbLib'];
const docs: [string, number][] = [
  ['Home Page', 101], ['BMP581.PcbLib', 125], ['BMI270.SchLib', 121], ['BMI270.PcbLib', 121], ['BMP581.SchLib', 125],
  ['OPT3007YMFR.PcbLib', 166], ['OPT3007YMFR.SchLib', 166], ['TMAG5231A2DQDBZR.SchLib', 215], ['TMAG5231A2DQDBZR.PcbLib', 214],
];
const layers: [string, string, number][] = [
  ['[1] Top Layer', '#f00', 128], ['[2] Bottom Layer', '#00f', 142], ['Mechanical 1', '#f0f', 119], ['Mechanical 13', '#f0f', 126],
  ['Mechanical 15', '#008000', 128], ['Top Overlay', '#ff0', 113], ['Bottom Overlay', '#808000', 136], ['Top Paste', '#808080', 99],
  ['Bottom Paste', '#800000', 121], ['Top Solder', '#800080', 105], ['Bottom Solder', '#f0f', 127], ['Drill Guide', '#800000', 102], ['Keep-', '#f0f', 65],
];
const snaps: [string, boolean][] = [
  ['Track/Arcs Vertices', true], ['Track/Arcs Lines', false], ['Arc Centers', true], ['Intersections', true], ['Pad Centers', true],
  ['Pad Vertices', false], ['Pad Edges', false], ['Via Centers', true], ['Regions/Polygons/Fills', true], ['Footprint Origins', false],
  ['3D Body Snap Points', false], ['', false],
];
const pageTabs: [string, string][] = [
  ['E', 'Fo'], ['D', 'BM'], ['D', 'BM'], ['P', 'bst'], ['D', 'BM'], ['P', 'bst'], ['D', 'BM'], ['G', 'WI'], ['U', 'Ult'], ['D', 'OP'], ['P', 'op'], ['D', 'OP'], ['D', 'TM'],
];

const iconFor = (name: string, shortcut: boolean) => (name.endsWith('PcbLib') ? <PcbIcon shortcut={shortcut} /> : <SchIcon shortcut={shortcut} />);

/* ---------- PCB canvas ---------- */
const Pad = ({ x, y, n, ty }: { x: number; y: number; n: string; ty: number }) => (
  <>
    <rect x={x - 258} y={y - 142} width={516} height={283.5} rx={62} fill="#800080" />
    <rect x={x - 222} y={y - 106} width={444} height={212} rx={28} fill="#f00" />
    <text x={x} y={ty} fontSize="34" fill="#ffb4b4" textAnchor="middle" fontFamily="Roboto">{n}</text>
  </>
);
const Dim = ({ x, y, w, t }: { x: number; y: number; w: number; t: string }) => (
  <>
    <rect x={x} y={y} width={w} height={18} fill="#ff0" />
    <rect x={x + 5.5} y={y} width={w - 10} height={18} fill="#0ff" />
    <text x={x + w / 2} y={y + 16} fontSize="15.500" fill="#0a3c4c" textAnchor="middle" fontFamily="Liberation Sans" xmlSpace="preserve">{t}</text>
  </>
);
const Board = () => (
  <svg width={1632} height={1235} viewBox="504 94 1632 1235" fill="none">
    <defs>
      <pattern id="snapDots" x={663} y={182} width={9} height={9} patternUnits="userSpaceOnUse"><rect width={1} height={1} fill="#625e5c" /></pattern>
      <pattern id="gridDots" x={663} y={182} width={45} height={45} patternUnits="userSpaceOnUse"><rect width={1} height={1} fill="#8c8886" /></pattern>
    </defs>
    <rect x={504} y={94} width={1632} height={1235} fill="#6e6a68" />
    <rect x={504} y={94} width={1632} height={1235} fill="url(#snapDots)" />
    <rect x={504} y={94} width={1632} height={1235} fill="url(#gridDots)" />
    <path d="M2200 107.500H780.500V1332.500H2200" stroke="#008000" strokeWidth={17} strokeLinejoin="round" />
    <circle cx={637} cy={371} r={71} fill="#ff0" />
    <circle cx={637} cy={371} r={1} fill="#c8a000" />
    <path d="M1420 197H1237V1243H1420M1702 480V960" stroke="#f0f" strokeWidth={44} strokeLinejoin="round" />
    <path d="M1429 197H1702V501M1702 940V1243H1429" stroke="#ff0" strokeWidth={44} strokeLinejoin="round" strokeLinecap="round" />
    <Pad x={1092} y={380} n="1" ty={395} />
    <Pad x={1092} y={1061} n="2" ty={1075} />
    <Pad x={1848} y={720.5} n="3" ty={734.5} />
    <path d="M941.500 272V488M869 335.500H1309M833 362.500H1354" stroke="#58c8b0" strokeWidth={2} />
    <path d="M1092 372V1060" stroke="#6fc8a4" strokeWidth={2} />
    <path d="M1092 1060.500H1847" stroke="#a8a890" strokeWidth={1.5} />
    <circle cx={1470} cy={720} r={20} stroke="#fff" strokeWidth={1.3} />
    <path d="M1450 700L1490 740M1490 700L1450 740" stroke="#fff" strokeWidth={1.3} />
    <Dim x={1034} y={326} w={110} t="X : 1.225mm" />
    <Dim x={1043} y={353} w={101} t="X : 1.45mm" />
    <Dim x={895} y={371} w={92} t="Y : 0.6mm" />
    <Dim x={1046} y={711} w={92} t="Y : 1.9mm" />
    <Dim x={1414} y={1052} w={110} t="X : 2.105mm" />
  </svg>
);

/* ---------- Land pattern drawing ---------- */
const Head = ({ x, y, a }: { x: number; y: number; a: number }) => (
  <polygon points="0,0 -9,-2.600 -9,2.600" fill="#000" transform={`translate(${x} ${y}) rotate(${a})`} />
);
const CL = ({ x, y }: { x: number; y: number }) => (
  <path d={`M${x + 3} ${y - 4}Q${x - 5} ${y - 5} ${x - 4} ${y}T${x + 3} ${y + 4}M${x} ${y - 7}V${y + 7}H${x + 6}`} stroke="#444" strokeWidth="1" />
);
const LandPattern = () => (
  <svg width={786} height={583} viewBox="1735 1888.500 786 583" fill="none" fontFamily="Liberation Sans" fontSize="13">
    <g stroke="#3d9bff" strokeWidth="1.500">
      <rect x={2042} y={2020} width={86} height={41} rx={3} />
      <rect x={2042} y={2147} width={86} height={40} rx={3} />
      <rect x={2181} y={2084} width={87} height={40} rx={5} />
    </g>
    <g stroke="#444" strokeWidth="1">
      <path d="M2042 1981V2018M2128 1981V2018M2044 1987H2058M2112 1987H2126" />
      <path d="M1990 2020H2039M1990 2061H2039M1996.500 2002V2018M1996.500 2063V2079" />
      <path d="M2085 2013V2031M2085 2038V2043M2085 2050V2069M2085 2074V2081M2085 2086V2105M2085 2111V2117M2085 2122V2140M2085 2147V2178M2085 2183V2189M2085 2194V2222" />
      <path d="M2032 2041H2076M2082 2041H2088M2093 2041H2136" />
      <path d="M2154.500 1995.500V2017M2154.500 2023V2030M2154.500 2035V2056M2154.500 2062V2068M2154.500 2074V2095M2154.500 2101V2107M2154.500 2112V2132M2154.500 2138V2141M2154.500 2146V2164M2154.500 2169V2174M2154.500 2179V2196" />
      <path d="M1972 2104H1998M2003 2104H2009M2014 2104H2034M2040 2104H2046M2051 2104H2072M2077 2104H2083M2088 2104H2109M2114 2104H2120M2125 2104H2146M2151 2104H2158M2163 2104H2183M2188 2104H2194M2199 2104H2220M2226 2104H2232M2237 2104H2258M2263 2104H2268M2274 2104H2299" />
      <path d="M2224.500 2074V2095M2224.500 2100V2108M2224.500 2113V2135M2224.500 2141V2147M2224.500 2153V2176M2224.500 2181V2187M2224.500 2192V2222" />
      <path d="M1972 2167H1999M2005 2167H2010M2016 2167H2037M2043 2167H2049M2055 2167H2075M2082 2167H2088M2093 2167H2140" />
      <path d="M1977.500 2107V2128M1977.500 2144V2165M2014 2208H2027L2043 2186M2087 2216H2138M2171 2216H2222" />
      <path d="M1925 2398H1943L1959 2428M2032 2403H2016L2000 2432M2235 2398H2252L2278 2428M2356 2390H2340L2316 2432" />
    </g>
    <Head x={2042} y={1987} a={180} /><Head x={2128} y={1987} a={0} />
    <Head x={1996.5} y={2020} a={90} /><Head x={1996.5} y={2061} a={-90} />
    <Head x={1977.5} y={2104} a={-90} /><Head x={1977.5} y={2167} a={90} />
    <Head x={2085} y={2216} a={180} /><Head x={2224.5} y={2216} a={0} />
    <Head x={2043} y={2186} a={-54} /><Head x={1960} y={2429} a={62} /><Head x={2000} y={2434} a={118} />
    <Head x={2279} y={2429} a={50} /><Head x={2316} y={2434} a={120} />
    <CL x={2153} y={1986} /><CL x={2305} y={2105} />
    <g fill="#1a1a1a" textAnchor="middle">
      <text x={2085} y={1992} textLength={43}>3X (1.3)</text>
      <text x={2155.5} y={1977.5} textLength={25}>PKG</text>
      <text x={2032} y={2016}>1</text>
      <text x={1996} y={2046} textLength={43}>3X (0.6)</text>
      <text x={2309} y={2096.5} textLength={37}>SYMM</text>
      <text x={2276} y={2126}>3</text>
      <text x={1977.5} y={2140.5} textLength={50}>2X (0.95)</text>
      <text x={2033.5} y={2181}>2</text>
      <text x={1976} y={2213} textLength={68}>(R0.05) TYP</text>
      <text x={2154.5} y={2221} textLength={24}>(2.1)</text>
      <text x={2161} y={2275.5} fontSize="16" textLength={197}>LAND PATTERN EXAMPLE</text>
      <text x={2161} y={2289.5} textLength={66}>SCALE:15X</text>
    </g>
    <g fill="#1a1a1a">
      <text x={1837} y={2403} textLength={88}>SOLDER MASK</text><text x={1837} y={2416} textLength={57}>OPENING</text>
      <text x={2033} y={2407.5} textLength={40}>METAL</text>
      <text x={2147} y={2403} textLength={88}>METAL UNDER</text><text x={2147} y={2416} textLength={88}>SOLDER MASK</text>
      <text x={2357} y={2395} textLength={88}>SOLDER MASK</text><text x={2357} y={2409} textLength={57}>OPENING</text>
    </g>
    <rect x={1925} y={2429} width={115} height={80} rx={9} stroke="#a4f25c" strokeWidth="2" />
    <rect x={1930.5} y={2434} width={104} height={80} rx={4} stroke="#6fb2ff" strokeWidth="1.800" />
    <rect x={2239} y={2429} width={114} height={80} rx={9} stroke="#9ccbff" strokeWidth="1.600" strokeDasharray="6 4" />
    <rect x={2244} y={2434} width={104} height={80} rx={4} stroke="#a4f25c" strokeWidth="2" />
  </svg>
);

const g = '#c4c4c4';
const Projects = () => (
  <Column $w={492}>
    <PanelHeader><span>Projects</span><HeaderIcons><Tri w={8} /><PinIcon /><Cross /></HeaderIcons></PanelHeader>
    <PanelBody>
      <ProjectTools><Floppy /><Docs /><Folder badge="find" /><Folder badge="gear" /><Sep $h={15} $m="0 -6px 0 -8px" /><Gear /></ProjectTools>
      <TreeBox>
        <TreeHead><SearchField $h={27} $gap={5}><Magnifier />Search</SearchField></TreeHead>
        <TreeRow $indent={0}>
          <RowIcon><Cloud /></RowIcon>
          <RowLabel>University of Colorado<Fill /><Svg w={12} h={4} vb="0 0 12 4"><path d="M0 1H3V4H0ZM4.500 1H7.500V4H4.500ZM9 1H12V4H9Z" fill="#fff" /></Svg><Status $w={6} /></RowLabel>
        </TreeRow>
        <TreeRow $indent={-1} $bold>
          <Twisty><Tri d="right" /></Twisty><RowIcon><PrjIcon /></RowIcon>
          <RowLabel>LPEDT_Assignment_PCB.PrjPcb<Fill /><Link>Save to Server</Link><Tick c="#1fc05a" s={10} /><Status $w={6} /></RowLabel>
        </TreeRow>
        <TreeRow $indent={-1} $bold>
          <Twisty><Tri d="corner" w={6} /></Twisty><RowIcon><PrjIcon lib /></RowIcon>
          <RowLabel $state="focus">Project_Vega.LibPkg *<Fill />
            <Svg w={14} h={10} vb="0 0 14 10"><path d="M3.500 9Q.5 9 .7 6.500T3.500 4Q4 1 7 1T10.500 4Q13.500 4.500 13.300 7T11 9Z" stroke="#ddd" /></Svg>
            <Status $w={9} /><DocGlyph c="#f06060" /><Status $w={29} />
          </RowLabel>
        </TreeRow>
        <TreeRow $indent={13}>
          <Twisty><Tri d="corner" w={6} /></Twisty>
          <RowIcon><Svg w={15}><path d="M0 3H6L8 1H14V4H15V15H0Z" fill="#8fc98b" /></Svg></RowIcon>
          <RowLabel>Source Documents</RowLabel>
        </TreeRow>
        {files.map((f, i) => (
          <TreeRow key={f} $indent={45} $file>
            <RowIcon>{iconFor(f, true)}</RowIcon>
            <RowLabel $state={i === 0 ? 'sel' : undefined}>{f}<Fill /><DocGlyph /><Status $w={30} /></RowLabel>
          </TreeRow>
        ))}
        <TreeRow $indent={0} $bold>
          <RowIcon><Svg><path d="M3 1H9L10 3H16V12H3Z" fill="#e0a85a" /><path d="M0 5H7V14H0Z" fill="#d8dde6" /><path d="M5 7H12V16H5Z" fill="#eee" stroke="#667" strokeWidth=".8" /><path d="M7 10H10M7 12.500H10" stroke="#567" /></Svg></RowIcon>
          <RowLabel>Project Group 1.DsnWrk</RowLabel>
        </TreeRow>
      </TreeBox>
    </PanelBody>
    <DockTabs><DockTab $w={65} $on>Projects</DockTab><DockTab $w={77}>Navigator</DockTab><DockTab $w={88}>PCB Library</DockTab><DockTab $w={96}>PCBLIB Filter</DockTab></DockTabs>
  </Column>
);

const barTools: [React.ReactNode, boolean][] = [
  [<Funnel c="#c5dbe6" />, false],
  [<Svg><path d="M5 3H10A5 5 0 0 1 10 13H5" stroke="#8a93c8" strokeWidth="2.600" /><path d="M10 13H5" stroke="#f08080" strokeWidth="3" /><path d="M1 1V15" stroke="#ccc" strokeDasharray="2 2" /></Svg>, false],
  [<Svg><path d="M8 1V15M1 8H15M6 3L8 1L10 3M6 13L8 15L10 13M3 6L1 8L3 10M13 6L15 8L13 10" stroke="#6b86d8" /></Svg>, true],
  [<Svg><path d="M1.500 1.500H14.500V14.500H1.500Z" stroke="#7390e8" strokeDasharray="2 1.500" strokeWidth="1.300" /></Svg>, true],
  [<Svg><path d="M1 14.500H15" stroke="#e08080" strokeWidth="2" /><path d="M2 5H5V12H2ZM6.500 1H9.500V12H6.500ZM11 6H14V12H11Z" fill="#8fb8dc" /></Svg>, true],
  [<Svg><path d="M1 8L10 2L15 6L6 12Z" fill="#9c9c9c" /><path d="M2 9V12M4 11V14M7 12V15M10 10V13M13 8V11" stroke="#d8d8d8" strokeWidth="1.500" /></Svg>, true],
  [<Svg><circle cx="8" cy="8" r="4.300" stroke="#f2b61e" strokeWidth="4" /></Svg>, false],
  [<Svg><circle cx="7" cy="6" r="3.600" stroke="#f2b61e" strokeWidth="3.600" /><path d="M7 9V16" stroke="#e0b080" strokeWidth="2.400" /><path d="M11 5H15" stroke="#4fb040" strokeWidth="2" /></Svg>, false],
  [<Svg w={17}><text x="8" y="14.500" fontSize="19" textAnchor="middle" fill="#6ca6e4" fontFamily="Liberation Serif">A</text></Svg>, true],
  [<Svg><path d="M2 14L14 2" stroke="#5b96dc" strokeWidth="2.200" /></Svg>, true],
  [<Svg><path d="M1 1H15V15H1Z" stroke="#e88ac8" strokeWidth="1.300" /><path d="M4 12L8 10L12 4" stroke="#d89a30" strokeWidth="1.600" /><circle cx="4.500" cy="11.500" r="1.600" stroke="#d89a30" /></Svg>, true],
  [<Svg><path d="M1.500 3V13.500H14.500V3" stroke="#6f9bd0" strokeWidth="1.500" /><circle cx="2" cy="2" r="1.600" fill="#d89a30" /><circle cx="14" cy="2" r="1.600" fill="#d89a30" /><text x="8" y="11.500" fontSize="8" textAnchor="middle" fill="#b8c4d4" fontFamily="Liberation Sans">10</text></Svg>, true],
  [<Svg><path d="M1 1H15V15H1Z" fill="#bfdcec" /><path d="M8 4H12V12H4V9H8Z" fill="#3e5666" /></Svg>, false],
];

const Editor = () => (
  <Column $w={1632}>
    <DocTabs>
      {docs.map(([n, w], i) => (
        <DocTab key={n} $w={w} $on={i === 8}>{i === 0 ? <House s={16} c="#5aa9f4" /> : iconFor(n, false)}{n}</DocTab>
      ))}
    </DocTabs>
    <Canvas>
      <Board />
      <HeadsUp>
        <HudRow><span>x: -2.300</span>dx: -3.475 mm</HudRow>
        <HudRow><span>y: -0.375</span>dy: -0.625 mm</HudRow>
        <HudLayer>Top Layer</HudLayer>
        <HudSnap>Snap: 0.025mm Hotspot Snap: 0.203mm</HudSnap>
      </HeadsUp>
      <ActiveBar>{barTools.map(([icon, more], i) => (<React.Fragment key={i}>{i === 5 && <Sep $h={16} />}<ToolCell $more={more}>{icon}</ToolCell></React.Fragment>))}</ActiveBar>
    </Canvas>
    <LayerBar>
      <LayerSet>LS</LayerSet>
      <LayerArrows><Tri d="left" c="#8a8a8a" w={9} /><Sep $h={20} /><Tri d="right" w={9} /></LayerArrows>
      {layers.map(([n, c, w], i) => <LayerTab key={n} $w={w} $on={i === 0}><Swatch $c={c} />{i === 0 ? <span>{n.slice(0, 3)}<b>{n.slice(3)}</b></span> : n}</LayerTab>)}
    </LayerBar>
  </Column>
);

const Properties = () => (
  <Column $w={412}>
    <PanelHeader><span>Properties</span><HeaderIcons><Tri w={8} /><PinIcon /><Cross /></HeaderIcons></PanelHeader>
    <PanelBody>
      <OptionsRow>Library Options<Fill />3D Bodies (and 9 more)<FilterButton><Funnel s={16} /><Tri w={9} /></FilterButton></OptionsRow>
      <PropSearch $h={27} $gap={10}><Magnifier />Search</PropSearch>
      <PropTabs><PropTab $w={65} $on>General</PropTab><PropTab $w={74}>Footprint</PropTab></PropTabs>
      <PropScroll>
        <PropContent>
          <Heading $top={12}><Tri d="corner" w={7} />Selection Filter</Heading>
          <Group $h={122}>
            <Buttons><Button $w={104} $h={32}>All objects</Button></Buttons>
            <Buttons><Button $w={84} $on>3D Bodies</Button><Button $w={80} $on>Keepouts</Button><Button $w={59} $on>Tracks</Button><Button $w={49} $on>Arcs</Button><Button $w={51} $on>Pads</Button></Buttons>
            <Buttons><Button $w={47} $on>Vias</Button><Button $w={71} $on>Regions</Button><Button $w={44} $on>Fills</Button><Button $w={53} $on>Texts</Button><Button $w={58} $on>Other</Button></Buttons>
          </Group>
          <Heading $top={19}><Tri d="corner" w={7} />Snap Options</Heading>
          <Group $h={525}>
            <Buttons $mb={4}><Button $w={54} $on>Grids</Button><Button $w={65}>Guides</Button><Button $w={50}>Axes</Button></Buttons>
            <Caption $h={28}><b>Snapping</b><span>Shift+E</span></Caption>
            <Segments><Segment>All Layers</Segment><Segment $on>Current Layer</Segment><Segment>Off</Segment></Segments>
            <Caption $h={29}><b>Objects for snapping</b></Caption>
            <SnapTable>
              <SnapHead>On/Off<Sep $h={15} $m="0 8px 0 8px" />Objects<Fill /><Sep $h={15} /></SnapHead>
              <SnapBody>
                <SnapRows>{snaps.map(([n, on], i) => <SnapRow key={i} $on={i === 0}><Check>{on && <Tick s={12} />}</Check>{n}</SnapRow>)}</SnapRows>
                <Track $w={18}><Spacer $h={8} /><Tri d="up" c="#8a8a8a" w={8} /><Thumb $h={237} $mt={5} $mb={20} /><Tri c="#8a8a8a" w={8} /></Track>
              </SnapBody>
            </SnapTable>
            <Field $mt={8} $lift={4}><label>Snap Distance</label><Input $h={29} $pl={4}>0.203mm<Tri w={11} /></Input></Field>
            <Field $mt={4} $lift={2}><label>Axis Snap Range</label><Input $h={28} $pl={7}>5.08mm</Input></Field>
          </Group>
          <Heading $top={13}><Tri d="corner" w={7} />Grid Manager</Heading>
          <Grid $h={217}>
            <GridHead><GridCell $w={75}>Prior...<Tri d="up" c="#222" w={10} /></GridCell><GridCell $w={94}>Name</GridCell><GridCell $w={57}>Color</GridCell><GridCell $w={56}>Origin</GridCell><GridCell $w={80} $last>Enabled</GridCell></GridHead>
            <GridRow><GridCell $w={75} $last>50</GridCell><GridCell $w={103} $last>Global Boa...</GridCell><GridCell $w={132} $last><ColorBox /></GridCell><Check><Tick /></Check></GridRow>
            <GridFoot>
              <Button $w={93}>Add<Tri w={9} /></Button><Button $w={94} $dim>Properties</Button>
              <Button $w={39} $dim><Svg w={15}><path d="M2 3H14V5H2ZM6 1H10V3M3 6H13V15H3Z" fill="#7a7a7a" /><path d="M6 8V13M8 8V13M10 8V13" stroke="#484848" /></Svg></Button>
            </GridFoot>
          </Grid>
          <Heading $top={19}><Tri d="corner" w={7} />Guide Manager</Heading>
          <Grid $h={45} $cut>
            <GridHead><GridCell $w={75}>Enabled</GridCell><GridCell $w={63}>Name</GridCell><GridCell $w={88}>X</GridCell><GridCell $w={87}>Y</GridCell><GridCell $w={57} $last>Color</GridCell></GridHead>
          </Grid>
        </PropContent>
        <Track $w={16}><Spacer $h={7} /><Tri d="up" c="#8a8a8a" w={9} /><Thumb $h={787} $mt={6} $mb={258} /><Tri c="#8a8a8a" w={9} /></Track>
      </PropScroll>
      <Nothing>Nothing selected</Nothing>
    </PanelBody>
    <DockTabs><DockTab $w={96}>Components</DockTab><DockTab $w={149}>Comments and Tasks</DockTab><DockTab $w={79} $on>Properties</DockTab></DockTabs>
  </Column>
);

const AltiumWindow = () => (
  <Monitor $w={2560} $h={1440}>
    <TitleBar>
      <QuickAccess><Altium /><Floppy /><Floppies /><Folder badge="open" /><Folder badge="doc" /><Undo c="#86aee8" /><Undo c="#7a7a7a" flip /></QuickAccess>
      <TitleText>Project_Vega.LibPkg - Altium Designer Professional (24.9.1)</TitleText>
      <TitleSearch><Magnifier s={13} />Search</TitleSearch>
      <WinButton $w={58}><Svg w={10} vb="0 0 10 10"><path d="M1 8H9" stroke="#fff" strokeWidth="2" /></Svg></WinButton>
      <WinButton $w={42} $pr={7}><Svg w={12}><path d="M1 6H11V15H1ZM4 6V1H15V11H11" stroke="#fff" strokeWidth="1.600" /></Svg></WinButton>
      <WinButton $w={46} $red><Cross s={13} /></WinButton>
    </TitleBar>
    <MenuBar>
      {menu.map(([a, u, b, w]) => <MenuItem key={u + b} $w={w}>{a}<u>{u}</u>{b}</MenuItem>)}
      <MenuRight>
        <HeadButton $w={37}><Svg w={17}><path d="M2 2H14V12H6L2 15Z" fill="#fff" /><path d="M8 4V10M5 7H11" stroke="#444" strokeWidth="1.500" /></Svg></HeadButton>
        <HeadButton $w={73}><Svg w={11}><path d="M1 13Q2 5 9 5V1L16 7L9 12V9Q4 9 1 13Z" fill="#4f9df0" /></Svg>Share</HeadButton>
        <Sep $h={15} $m="0 7px 0 2px" /><House s={13} /><Cell $w={33}><Gear s={14} c="#fff" /></Cell>
        <Sep $h={15} $m="0 5px 0 0" /><Cloud />&nbsp;University of Colorado<Sep $h={15} $m="0 9px 0 8px" /><Person /><Cell $w={14}><Tri w={8} /></Cell><Cell $w={5} />
      </MenuRight>
    </MenuBar>
    <Workspace><Projects /><Editor /><Properties /></Workspace>
    <StatusBar>
      <StatusText $w={156}>X:-2.3mm Y:-0.375mm</StatusText><StatusText $w={120}>Grid: 0.025mm</StatusText><StatusText $w={365}>(Hotspot Snap)</StatusText>
      <Sep $h={21} /><Cell $w={645} /><Sep $h={21} /><Fill /><Button $w={51} $h={23}>Panels</Button>
    </StatusBar>
    <Taskbar>
      <TaskCell $w={60}><WinLogo /></TaskCell>
      <TaskSearch><Svg w={22}><circle cx="9.500" cy="6" r="4.800" stroke="#eee" strokeWidth="1.100" /><path d="M6 9.500L1 15" stroke="#eee" strokeWidth="1.200" /></Svg>Type here to search<SearchArt /></TaskSearch>
      <TaskCell $w={60}><TaskView /></TaskCell>
      <TaskApps wordHl />
      <Tray>
        <Weather><Moon />60°F  Partly cloudy</Weather>
        {tray.map((t, i) => <Cell key={i} $w={30}>{t}</Cell>)}
        <Cell $w={44}><Eng>ENG</Eng></Cell>
        <Clock $w={94}>00:19<br />24-09-2024</Clock>
        <Cell $w={59}><Svg w={34} h={32} vb="0 0 34 32"><path d="M3 3H23V19H12L8 23V19H3Z" fill="#fff" /><path d="M7 7.500H19M7 11H19M7 14.500H15" stroke="#233" strokeWidth="1.300" /><circle cx="23" cy="21" r="10" fill="#2a3234" stroke="#8a9092" /><text x="23" y="26" fontSize="13" fontWeight="700" fill="#fff" textAnchor="middle" fontFamily="Open Sans">2</text></Svg></Cell>
        <Sep $h={50} $c="#8a9092" /><Cell $w={5} />
      </Tray>
    </Taskbar>
  </Monitor>
);

const Box = ({ bg, t, c = '#fff', fs = 14 }: { bg: string; t: string; c?: string; fs?: number }) => (
  <Svg w={20} vb="0 0 20 20"><rect width="20" height="20" rx="2" fill={bg} /><text x="10" y={10 + fs * 0.36} fontSize={fs} fontWeight="600" fill={c} textAnchor="middle" fontFamily="Open Sans">{t}</text></Svg>
);
const favs: Record<string, React.ReactNode> = {
  E: <Svg w={20} vb="0 0 20 20"><text x="10" y="18" fontSize="25" fill="#f56400" textAnchor="middle" fontFamily="Liberation Serif">E</text></Svg>,
  D: <DFav />,
  P: <Pdf />,
  G: <Gear s={16} c="#c8202c" />,
  U: <Svg w={20} vb="0 0 20 20"><path d="M1 0H15V20H1Z" fill="#e6eef4" /><path d="M1 0H5V20H1Z" fill="#5a9cc8" /><path d="M9 6H20V18H9Z" fill="#f7f7f7" stroke="#aab" /></Svg>,
};
const pins: React.ReactNode[] = [
  <Volume2 size={17} color="#d9bcc8" strokeWidth={1.6} />,
  <Svg w={20} vb="0 0 20 16"><path d="M0 15V2L5 6V15Z" fill="#4285f4" /><path d="M15 15V6L20 2V15Z" fill="#34a853" /><path d="M0 2Q1 0 3 1L10 6.500L17 1Q19 0 20 2L15 7L10 11L5 7Z" fill="#ea4335" /><path d="M15 3L17 1Q19 0 20 2V4L15 8Z" fill="#fbbc04" /></Svg>,
  <Svg w={22} vb="0 0 20 20"><path d="M6 1H18V15H6Z" fill="#1a7fd4" /><path d="M12 5H18V10H12Z" fill="#50c0f4" /><path d="M4 10L12 14L20 9V18H4Z" fill="#2a9be8" /><rect y="5" width="11" height="11" rx="1" fill="#0f5fb4" /><circle cx="5.500" cy="10.500" r="2.600" stroke="#fff" strokeWidth="1.500" /></Svg>,
  <Svg w={20} vb="0 0 20 20"><rect width="20" height="20" rx="2" fill="#34a853" /><path d="M10 3V17M4 8H16" stroke="#fff" strokeWidth="2.200" /></Svg>,
  <FaGithub size={21} color="#fff" />,
  <AiTile><RiOpenaiFill size={16} color="#fff" /></AiTile>,
  <Box bg="#0a66c2" t="in" fs={15} />,
  <Box bg="#0a9bf5" t="JLC" fs={10} />,
  <Svg w={20} vb="0 0 20 20"><path d="M1 1H13V5H18V16L15 20H8V14H1Z" fill="#cfb87c" stroke="#222" /><path d="M9 4H4V11H9V8M9 8H15V16H11V12" stroke="#222" strokeWidth="1.800" /></Svg>,
  <Svg w={20} vb="0 0 20 20"><path d="M6 1H20V19H6Z" fill="#21a366" /><path d="M13 1H20V10H13Z" fill="#33c481" /><path d="M6 10H13V19H6Z" fill="#185c37" /><rect y="5" width="11" height="11" rx="1" fill="#107c41" /><path d="M3 7.500L8 13.500M8 7.500L3 13.500" stroke="#fff" strokeWidth="1.500" /></Svg>,
];

const BrowserWindow = () => (
  <Monitor $w={1920} $h={1080} $left={1209}>
    <TabStrip>
      {pins.map((p, i) => <Pin key={i}>{p}</Pin>)}
      {pageTabs.map(([f, t], i) => <BTab key={i}><TabFav>{favs[f]}</TabFav><BTabText>{t}</BTabText></BTab>)}
      <ActiveTab><Pdf /><Cross s={18} k={1.8} /></ActiveTab>
      <BTab><DFav /><BTabText>TM</BTabText></BTab>
      <Cell $w={44}><Plus size={17} color="#b08496" strokeWidth={1.5} /></Cell><Cell $w={39} />
      <Cell $w={52}><ChevronDown size={18} color="#fff" /></Cell>
      <Cell $w={52}><Minus size={15} color="#a87a8d" strokeWidth={1.5} /></Cell>
      <Cell $w={58}><Svg w={15}><path d="M1 4H11V15H1ZM4 4V1H14V12H11" stroke="#a87a8d" strokeWidth="1.200" /></Svg></Cell>
      <Cell $w={58}><Cross s={18} c="#a87a8d" k={1.2} /></Cell>
    </TabStrip>
    <AddressBar>
      <Cell $w={38}><ChevronLeft size={22} color="#cc86a5" strokeWidth={1.5} /></Cell><Cell $w={38}><ChevronRight size={22} color="#cc86a5" strokeWidth={1.5} /></Cell>
      <Cell $w={38}><Svg w={20}><path d="M13.500 11A6.500 6.500 0 1 1 13.500 5" stroke="#fff" strokeWidth="1.600" /><path d="M10.500 6.500H15V2Z" fill="#fff" /></Svg></Cell><Cell $w={165} /><Cell $w={39}><Bookmark size={20} color="#f3dfe7" strokeWidth={1.6} /></Cell>
      <UrlBox>
        <Puzzle size={19} color="#fff" strokeWidth={1.6} />
        <UrlTitle>Adobe Acrobat: PDF edit, convert, sign tools</UrlTitle>
        <UrlText>chrome-extension://efaidnbmnnnibpcajpcglclefindmkaj/https://www.ti.com/li...</UrlText>
        <Sep $h={20} $c="#b37a92" />
        <Cell $w={50}><Brave s={23} c="#49505e" /></Cell>
        <Cell $w={34}><Svg w={23} h={20} vb="0 0 24 20"><path d="M12 1L1 19L8 15L12 8Z" fill="#ff4724" /><path d="M12 1L23 19L16 15L12 8Z" fill="#9e1f63" /><path d="M1 19H23L16 15H8Z" fill="#662d91" /><path d="M12 8L16 15H8Z" fill="#fff" /></Svg></Cell>
      </UrlBox>
      <Cell $w={112} />
      {[Puzzle, Music, Download].map((I, i) => <Cell key={i} $w={38}><I size={20} color="#f3dfe7" strokeWidth={1.6} /></Cell>)}
      <Cell $w={38}><Svg w={19}><path d="M1 1.500H15V14.500H1Z" stroke="#f3dfe7" strokeWidth="1.300" /><path d="M10 1H15V15H10Z" fill="#f3dfe7" /></Svg></Cell>
      <Cell $w={38}><Wallet size={20} color="#f3dfe7" strokeWidth={1.6} /></Cell>
      <Cell $w={37}><Svg w={20}><path d="M7 1L9 6L14 8L9 10L7 15L5 10L0 8L5 6Z" stroke="#f3dfe7" strokeWidth="1.300" /><path d="M13 11V16M10.500 13.500H15.500" stroke="#f3dfe7" strokeWidth="1.200" /></Svg></Cell>
      <Vpn><Svg w={14}><circle cx="8" cy="8" r="7.500" fill="#bda0b4" /><path d="M4 8H12" stroke="#7d1843" strokeWidth="2" /></Svg>VPN</Vpn>
      <Cell $w={43}><Menu size={24} color="#fff" strokeWidth={1.5} /></Cell>
    </AddressBar>
    <AcroBar>
      <Pdf s={29} /><Sep $h={30} $m="0 26px 0 26px" $c="#4b4b4b" />
      <AcroItem $w={88}>All tools</AcroItem><AcroItem $w={57}>Edit</AcroItem><AcroItem $w={86}>Convert</AcroItem><AcroItem $w={524}>E-Sign</AcroItem>
      <Globe size={21} color={g} strokeWidth={1.6} /><Cell $w={10} />
      <AcroItem $w={49} $weight={600}>ti.com</AcroItem><AcroItem $w={13}>/</AcroItem><AcroItem $w={83} $weight={700}>tmag5231</AcroItem>
      <Cell $w={20}><ChevronDown size={12} color={g} /></Cell><Fill />
      <Cell $w={46}><Svg w={21}><circle cx="6.500" cy="6.500" r="5.500" stroke={g} strokeWidth="1.300" /><path d="M10.500 10.500L15.500 15.500" stroke={g} strokeWidth="1.300" /></Svg></Cell>
      <Cell $w={46}><Svg w={22}><path d="M6 1H12L15 4V14H6ZM12 1V4.500H15M3.500 2V13M1 3V12" stroke={g} strokeWidth="1.200" /></Svg></Cell>
      <Cell $w={45}><Download size={22} color={g} strokeWidth={1.7} /></Cell>
      <Cell $w={45}><Printer size={23} color={g} strokeWidth={1.6} /></Cell>
      <Cell $w={45}><Svg w={18} h={4} vb="0 0 18 4"><path d="M0 1H3V4H0ZM7.500 1H10.500V4H7.500ZM15 1H18V4H15Z" fill={g} /></Svg></Cell>
      <Sep $h={30} $m="0 14px 0 2px" $c="#4b4b4b" /><Pill $w={90}>Share</Pill><Cell $w={13} />
      <Pill $w={156} $ai><Svg w={24} vb="0 0 24 24"><path d="M13 4H3V17H8V21L12 17H20V12M11 8L12 10L14 11L12 12L11 14L10 12L8 11L10 10ZM18 1L19.500 4.500L23 6L19.500 7.500L18 11L16.500 7.500L13 6L16.500 4.500Z" stroke="#fff" strokeWidth="1.500" /></Svg>AI Assistant</Pill>
      <Sep $h={30} $m="0 12px 0 14px" $c="#4b4b4b" /><AcroItem $w={64} $weight={600}>Sign in</AcroItem>
    </AcroBar>
    <Viewer>
      <ToolRail>
        <RailTool $on $more><Svg w={19}><path d="M4 0L14 10H9.500L12 15L10 16L7.500 11L4 14Z" fill="#fff" /></Svg></RailTool>
        <RailTool $more><Svg w={22}><path d="M15 14.500H8A6.700 6.700 0 1 1 14.700 8V14.500M5 6H11M5 8.500H11M5 11H9" stroke={g} strokeWidth="1.300" /></Svg></RailTool>
        <RailTool $more><Svg w={22}><path d="M5 11L12 1L15 3L8 13L5 14Z" stroke={g} strokeWidth="1.200" /><path d="M0 15L3 11L5 15Z" fill={g} /><path d="M8 15L10 12H15V15Z" fill="#777" /></Svg></RailTool>
        <RailTool><Svg w={22}><path d="M11 13.500H8Q1 13 1 8.500T9 2.500Q15 3 15 6.500T11 10Q9 10 8.500 9" stroke={g} strokeWidth="1.500" /></Svg></RailTool>
        <RailTool $more><Svg w={22}><path d="M1 1H15V15H1Z" stroke={g} strokeWidth="1.300" strokeDasharray="2 1.200" /><text x="8" y="12" fontSize="10.500" textAnchor="middle" fill={g} fontFamily="Open Sans">A</text></Svg></RailTool>
        <RailTool $more><Svg w={22}><path d="M1 15L3 6L9 2L14 7L10 13ZM1 15L7 9M9 2L11 0L16 5L14 7M12 15Q13 10 16 15" stroke={g} strokeWidth="1.300" /></Svg></RailTool>
      </ToolRail>
      <Pages>
        <FooterPage>
          <Rule />
          <TiBrand>
            <Svg w={36} h={34} vb="0 0 36 34"><path d="M10 0H19V9L34 11L36 20L30 24L25 34L20 30L16 22L11 23L8 18L0 14H10Z" fill="#111" /><path d="M23 5L20 12M19 14H25M22 12L20 22Q20 25 24 23" stroke="#fff" strokeWidth="1.500" /></Svg>
            <TiWords><div>T<small>EXAS</small></div><div>I<small>NSTRUMENTS</small></div></TiWords>
          </TiBrand>
          <TiUrl>www.ti.com</TiUrl>
        </FooterPage>
        <SheetPage>
          <SheetTitle>EXAMPLE BOARD LAYOUT</SheetTitle>
          <SheetSub><b>DBZ0003A</b>SOT-23 - 1.12 mm max height</SheetSub>
          <Rule />
          <SheetKind>SMALL OUTLINE TRANSISTOR</SheetKind>
          <Frame><LandPattern /></Frame>
        </SheetPage>
      </Pages>
      <PageScroll><Tri d="up" w={10} /><PageThumb /><Tri w={10} /></PageScroll>
      <RightRail>
        <RailCell $h={50}><Svg w={23}><path d="M9 2.500H2V15H13V8M4 6H8M4 9H10M4 12H8M12 1L13 3.500L15.500 4.500L13 5.500L12 8L11 5.500L8.500 4.500L11 3.500Z" stroke="#a3a1ff" strokeWidth="1.300" /></Svg></RailCell>
        <RailLine $h={2} />
        <RailCell $h={50}><Svg w={24}><path d="M2 1H12V10H7L4 13V10H2ZM13.500 4H15V12H13V15L10 12H8" stroke={g} strokeWidth="1.200" /></Svg></RailCell>
        <RailCell $h={50}><Svg w={24}><path d="M3 1H11V15L7 11L3 15Z" stroke={g} strokeWidth="1.300" /><path d="M14 2V9" stroke={g} strokeWidth="1.500" strokeDasharray="1.500 1.500" /></Svg></RailCell>
        <RailCell $h={50}><LayoutGrid size={21} color={g} strokeWidth={2} /></RailCell>
        <RailLine $h={2} />
        <Fill />
        <RailCell $h={50}><PageNo>27</PageNo></RailCell>
        <RailCell $h={50}>33</RailCell>
        <RailCell $h={30}><ChevronUp size={18} color={g} /></RailCell>
        <RailCell $h={68}><ChevronDown size={18} color={g} /></RailCell>
        <RailCell $h={56} $more><Sun size={22} color={g} strokeWidth={1.7} /></RailCell>
        <RailCell $h={44}><RotateCw size={21} color={g} strokeWidth={1.7} /></RailCell>
        <RailCell $h={56} $more><Svg w={22}><path d="M3 1H10L13 4V15H3ZM10 1V4.500H13M6 7L8 9M10 11L8 9" stroke={g} strokeWidth="1.300" /></Svg></RailCell>
        <RailCell $h={66}><ZoomIn size={22} color={g} strokeWidth={1.7} /></RailCell>
        <RailCell $h={34}><ZoomOut size={22} color={g} strokeWidth={1.7} /></RailCell>
        <Spacer $h={13} />
      </RightRail>
    </Viewer>
    <Taskbar>
      <TaskCell $w={60}><WinLogo /></TaskCell>
      <TaskCell $w={60}><Svg w={29}><circle cx="9.500" cy="6.500" r="5.600" stroke="#fff" strokeWidth="1.400" /><path d="M5.500 10.500L1 15.500" stroke="#fff" strokeWidth="1.500" /></Svg></TaskCell>
      <TaskCell $w={60}><TaskView /></TaskCell>
      <TaskApps />
      <Tray><Clock $w={94}>00:19<br />24-09-2024</Clock></Tray>
    </Taskbar>
  </Monitor>
);

export default function App() {
  return (
    <Desktop>
      <Global />
      <AltiumWindow />
      <BrowserWindow />
    </Desktop>
  );
}
